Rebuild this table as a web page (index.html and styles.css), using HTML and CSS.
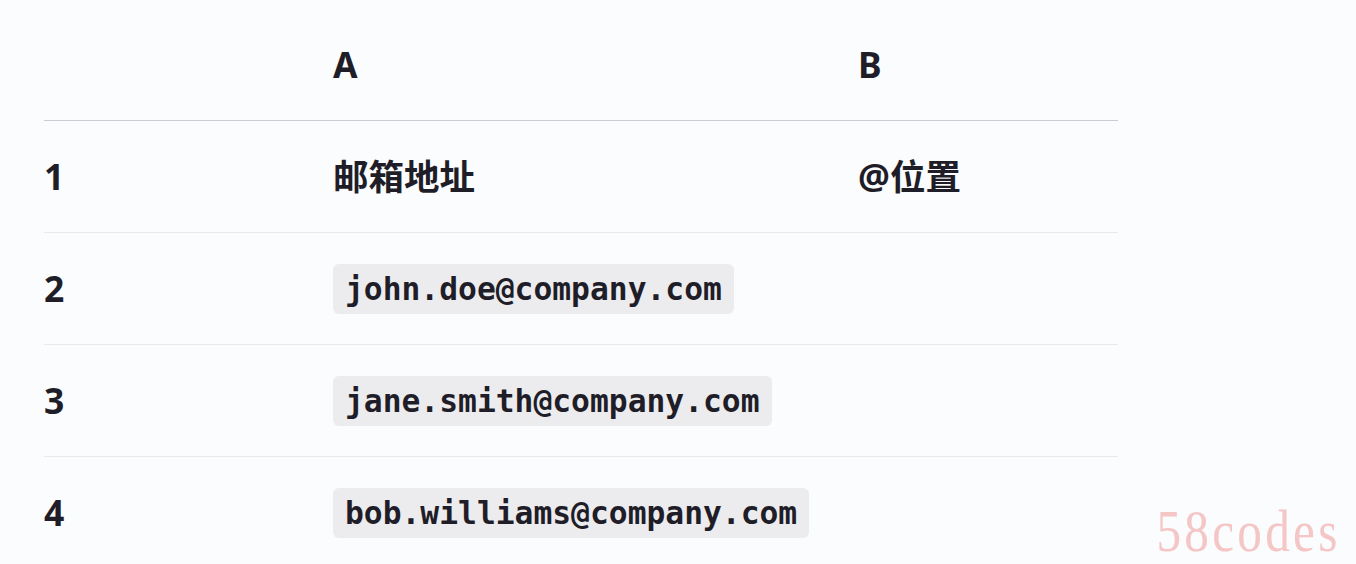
FILE: index.html
```html
<!DOCTYPE html>
<html lang="zh">
<head>
<meta charset="utf-8">
<title>Sheet</title>
<link rel="stylesheet" href="styles.css">
</head>
<body>
<main class="page">
  <table class="sheet">
    <colgroup>
      <col class="c-num">
      <col class="c-a">
      <col class="c-b">
    </colgroup>
    <thead>
      <tr>
        <th></th>
        <th>A</th>
        <th>B</th>
      </tr>
    </thead>
    <tbody>
      <tr>
        <td class="num">1</td>
        <td class="label">邮箱地址</td>
        <td class="label">@位置</td>
      </tr>
      <tr>
        <td class="num">2</td>
        <td><code class="chip">john.doe@company.com</code></td>
        <td></td>
      </tr>
      <tr>
        <td class="num">3</td>
        <td><code class="chip">jane.smith@company.com</code></td>
        <td></td>
      </tr>
      <tr>
        <td class="num">4</td>
        <td><code class="chip">bob.williams@company.com</code></td>
        <td></td>
      </tr>
    </tbody>
  </table>
  <div class="watermark">58codes</div>
</main>
</body>
</html>
```
FILE: styles.css
```css
html, body {
  margin: 0;
  padding: 0;
  background: #fbfcfd;
}

.page {
  position: relative;
  height: 564px;
  overflow: hidden;
  padding-left: 44px;
  box-sizing: border-box;
  font-family: "Noto Sans", "Noto Sans CJK SC", sans-serif;
  color: #1f1e28;
}

.sheet {
  border-collapse: collapse;
  table-layout: fixed;
  width: 1074px;
}

.c-num { width: 289px; }
.c-a { width: 525px; }
.c-b { width: 260px; }

.sheet th,
.sheet td {
  padding: 0;
  text-align: left;
  vertical-align: middle;
  font-weight: 700;
  font-size: 35.5px;
  line-height: 1.2;
}

.sheet thead th {
  height: 112px;
  padding-top: 8px;
  border-bottom: 1px solid #c9cdd3;
}

.sheet tbody td {
  height: 111px;
  border-bottom: 1px solid #e8eaee;
}

.sheet tbody tr:last-child td {
  border-bottom: none;
}

.num {
  padding-left: 2px;
}

.chip {
  display: inline-block;
  font-family: "DejaVu Sans Mono", "Liberation Mono", monospace;
  font-weight: 700;
  font-size: 31.3px;
  line-height: 50px;
  height: 50px;
  padding: 0 12px;
  background: #ececef;
  border-radius: 6px;
  color: #1f1e28;
  vertical-align: middle;
}

.watermark {
  position: absolute;
  right: 15px;
  bottom: 3px;
  font-family: "Liberation Serif", serif;
  font-size: 60px;
  line-height: 1;
  letter-spacing: 4px;
  color: #f5c6c6;
  transform: scaleX(0.82);
  transform-origin: right bottom;
}
```
